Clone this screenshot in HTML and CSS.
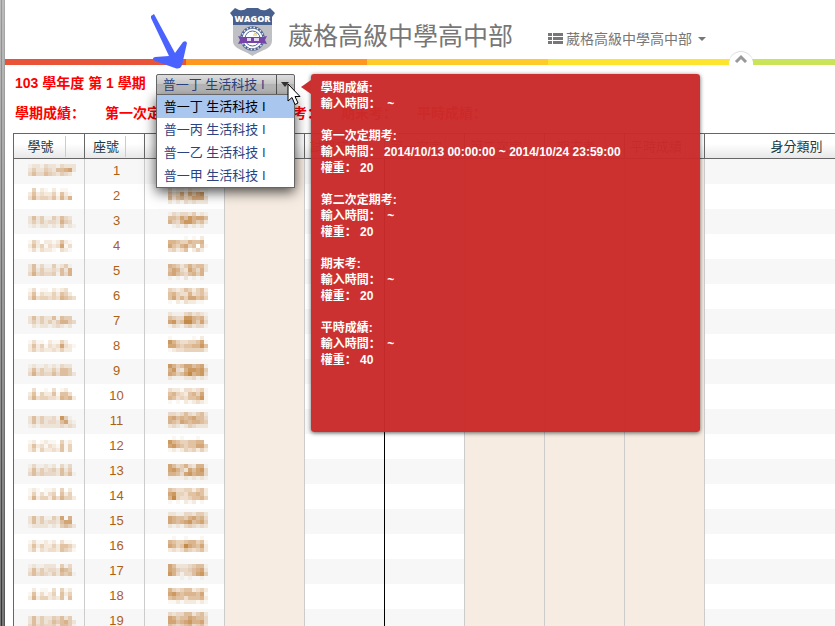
FILE: index.html
```html
<!DOCTYPE html>
<html lang="zh-Hant">
<head>
  <meta charset="UTF-8" />
  <meta name="viewport" content="width=device-width, initial-scale=1.0"/>
  <title>葳格高級中學高中部</title>
  <link rel="stylesheet" href="styles.css">
</head>
<body>
  <div class="edge"></div>
  <div class="page">
    <header class="header">
      <svg class="logo" width="46" height="48" viewBox="0 0 46 48">
        <path d="M3 16H42V33C42 41 31 42 22.500 48C14 42 3 41 3 33Z" fill="#bfc0c3"/>
        <path d="M0 5L5 0L9 2Q14 3 17 0H28Q31 3 36 2L40 0L45 5L42 9V17H3V9Z" fill="#47608f"/>
        <circle cx="22.500" cy="30.500" r="11" fill="#fff" stroke="#4f6594" stroke-width="2.500"/>
        <circle cx="22.500" cy="30.500" r="11" fill="none" stroke="#dfe4ee" stroke-width="1.500" stroke-dasharray="1.500 2"/>
        <circle cx="22.500" cy="30.500" r="7.500" fill="#fff" stroke="#4f6594"/>
        <path d="M24 25l3 1M23 27h4" stroke="#e5c55a"/>
        <path d="M8 28L13 29H32L37 28L35 32L37 36L31 35H14L8 36L10 32Z" fill="#7546a8"/>
        <path d="M17 30h4v3h-4zM24 30h5v3h-5z" fill="#e3d5ef"/>
        <text x="22.500" y="14" class="logo-text">WAGOR</text>
      </svg>
      <h1 class="school">葳格高級中學高中部</h1>
      <a class="school-menu" href="#">
        <svg width="15" height="12" viewBox="0 0 15 12" fill="#777">
          <path d="M0 0h4v3H0zM5 0h10v3H5zM0 4h4v3H0zM5 4h10v3H5zM0 8h4v3H0zM5 8h10v3H5z"/>
        </svg>
        <span>葳格高級中學高中部</span>
        <span class="caret"></span>
      </a>
    </header>

    <div class="rainbow">
      <span class="red"></span>
      <span class="orange"></span>
      <span class="amber"></span>
      <span class="yellow"></span>
      <span class="green"></span>
      <button class="collapse" type="button" aria-label="收合">
        <svg width="14" height="9" viewBox="0 0 14 9"><path d="M2 8L7 3L12 8" fill="none" stroke="#999" stroke-width="3"/></svg>
      </button>
    </div>

    <main class="content">
      <div class="term">
        <label for="course">103 學年度 第 1 學期</label>
        <div class="picker">
          <select id="course" class="course">
            <option>普一丁 生活科技 I</option>
            <option>普一丙 生活科技 I</option>
            <option>普一乙 生活科技 I</option>
            <option>普一甲 生活科技 I</option>
          </select>
          <span class="picker-arrow"></span>
          <ul class="course-list">
            <li class="active">普一丁 生活科技 I</li>
            <li>普一丙 生活科技 I</li>
            <li>普一乙 生活科技 I</li>
            <li>普一甲 生活科技 I</li>
          </ul>
          <div class="tip" lang="zh-Hans">
            <p>學期成績:<br>輸入時間： &nbsp;~</p>
            <p>第一次定期考:<br>輸入時間： 2014/10/13 00:00:00 ~ 2014/10/24 23:59:00<br>權重： 20</p>
            <p>第二次定期考:<br>輸入時間： &nbsp;~<br>權重： 20</p>
            <p>期末考:<br>輸入時間： &nbsp;~<br>權重： 20</p>
            <p>平時成績:<br>輸入時間： &nbsp;~<br>權重： 40</p>
          </div>
          <svg class="cursor" width="14" height="23" viewBox="0 0 14 23">
            <path d="M1 1V18L5 14.500L8 21.500L11 20L8 13.500H13Z" fill="#fff" stroke="#000"/>
          </svg>
        </div>
      </div>

      <div class="scores" lang="zh-Hans">
        <span>學期成績：</span>
        <span>第一次定期考：</span>
        <span>第二次定期考：</span>
        <span>期末考：</span>
        <span>平時成績：</span>
      </div>

      <table class="grid">
        <colgroup>
          <col class="col-id"><col class="col-seat"><col class="col-score"><col class="col-score"><col class="col-score">
          <col class="col-score"><col class="col-score"><col class="col-score"><col class="col-score"><col>
        </colgroup>
        <thead>
          <tr>
            <th><div>學號</div></th>
            <th><div>座號</div></th>
            <th><div>姓名</div></th>
            <th><div>學期成績</div></th>
            <th><div>試算成績</div></th>
            <th><div>第一次定</div></th>
            <th><div>第二次定</div></th>
            <th><div>期末考</div></th>
            <th><div>平時成績</div></th>
            <th><div>身分類別</div></th>
          </tr>
        </thead>
        <tbody id="rows"></tbody>
      </table>
    </main>
  </div>

  <svg class="pointer" width="40" height="60" viewBox="0 0 40 60">
    <path d="M1 3L4 1L25 40L33 29Q36 27 37 30L32 52Q30 57 25 55L5 48Q1 45 5 44L19 43L1 5Z" fill="#4a63ff"/>
  </svg>

  <script>
    // masked student number and name, one digit per block (0 = clear, 9 = darkest)
    const ids = [
      '122132213222 242243255672 353354324320', '040210201100 252322415210 363443526360', '252411425320 242423326430 121221214121',
      '142022125210 252413237130 131322103210', '251311412410 252422325260 363433415360', '130110212300 251322425420 363443436543',
      '252422515440 242424246643 021221232120', '131102114200 252413237321 242322324220', '121121213220 252422425540 363433535542',
      '030010301200 251422515530 363443326562', '252422318410 252423325721 121222223232', '120121104120 252313215140 241422325140',
      '131121203130 252423425240 353433325351', '121011204020 141313405240 262442536442', '252411427060 252423325770 122221214542',
      '131121203110 252422425542 241323325431', '121122204130 252423326540 353432425451', '020110304120 151312405240 262442325150',
      '252422435240 252423545642 353433425541'
    ];
    const names = [
      '2232223221 6345364551 5463556471 2112223232', '3122132211 5347375781 6356457773 2121323222', '1323324121 5547586775 6436886452 0121312120',
      '0000101020 6654465560 7546745051 3423502420', '6542464552 5763275362 6754356460 1010201010', '4323542452 5643363453 5746477564 1021322110',
      '2111342321 5433886562 7845996473 1321342331', '1000001020 8643344571 7754556685 1233444442', '8645775671 6832688784 7645796783 2111223121',
      '3221332341 5643256471 6534355681 1010212321', '3323532452 6756567553 6547656654 2321243222', '0101000100 8654455660 7865455774 1212434242',
      '7534632661 7864275783 6653786773 1111212121', '5433442452 7844355652 6943345564 1010212010', '2211332442 7655467563 7656785674 2121343232',
      '0100100010 6544566451 7645976572 2323543452', '7522234551 7643345672 8631335784 0001010010', '6434552342 7865666571 5655355562 1121222121',
      '3233552452 7645576553 7756786673 5434563452'
    ];

    function mosaic(data, top) {
      let rects = '';
      data.split(' ').forEach((line, y) => {
        for (let x = 0; x < line.length; x++) {
          const alpha = Math.pow(line[x] / 9, 1.15).toFixed(2);
          rects += `<rect x="${x * 4}" y="${top + y * 4}" width="4" height="4" fill-opacity="${alpha}"/>`;
        }
      });
      return `<svg class="mosaic" width="${data.indexOf(' ') * 4}" height="23">${rects}</svg>`;
    }

    const idTop = [5, 4, 7, 6];
    const nameTop = [5, 4, 3, 2];
    let html = '';
    for (let i = 0; i < ids.length; i++) {
      html += `<tr><td>${mosaic(ids[i], idTop[i % 4])}</td><td class="seat">${i + 1}</td><td>${mosaic(names[i], nameTop[i % 4])}</td>`
        + '<td class="locked"></td><td class="total"></td><td></td><td class="locked"></td><td class="locked"></td><td class="locked"></td><td></td></tr>';
    }
    document.getElementById('rows').innerHTML = html;
  </script>
</body>
</html>
```
FILE: styles.css
```css
body {
  margin: 0;
  display: flex;
  height: 100vh;
  overflow: hidden;
  background: #fff;
  font-family: "Liberation Sans", "Noto Sans CJK TC", sans-serif;
  font-size: 13px;
}

.edge {
  flex: none;
  width: 5px;
  background:
    linear-gradient(to bottom, rgba(255,255,255,0.5), rgba(255,255,255,0.3) 40%, transparent),
    linear-gradient(to right, #777 0, #777 1px, #333 1px, #333 2px, #777 2px, #777 4px, #555 4px);
}

.page {
  flex: 1;
  min-width: 0;
  overflow: hidden;
}

.header {
  display: flex;
  align-items: flex-end;
  padding: 8px 0 3px 225px;
  color: #777;
}

.logo {
  flex: none;
}

.logo-text {
  fill: #fff;
  font-family: "Open Sans", "Liberation Sans", sans-serif;
  font-size: 9px;
  font-weight: 800;
  text-anchor: middle;
}

.school {
  margin: 0 35px 4px 12px;
  font-size: 25px;
  line-height: 32px;
  font-weight: normal;
  white-space: nowrap;
}

.school-menu {
  display: flex;
  align-items: center;
  gap: 3px;
  margin-bottom: 7px;
  color: #777;
  font-size: 14px;
  line-height: 20px;
  text-decoration: none;
  white-space: nowrap;
}

.caret {
  margin-left: 3px;
  border: 4px solid transparent;
  border-top-color: #777;
  border-bottom: 0;
}

.rainbow {
  position: relative;
  display: flex;
  height: 6px;
}

.rainbow span {
  width: 181px;
}

.rainbow .red { background: #e95438; }
.rainbow .orange { background: #ff971e; }
.rainbow .amber { background: #ffcb28; }
.rainbow .yellow { background: #fde52f; }
.rainbow .green { flex: 1; background: #cae45a; }

.collapse {
  position: absolute;
  right: 82px;
  bottom: 0;
  width: 24px;
  height: 13px;
  padding: 0;
  border: 0;
  border-radius: 12px 12px 0 0;
  background: #fff;
  box-shadow: 0 -1px 1px #ddd;
  line-height: 9px;
}

.content {
  padding: 9px 0 0 8px;
}

.term {
  display: flex;
  align-items: center;
  gap: 10px;
  padding-left: 2px;
  color: #f00;
  font-size: 14px;
  font-weight: bold;
  line-height: 18px;
}

.term label {
  padding-bottom: 2px;
}

.picker {
  position: relative;
  z-index: 2;
  width: 139px;
  height: 20px;
  font-size: 13px;
  font-weight: normal;
}

.course {
  display: block;
  appearance: none;
  box-sizing: border-box;
  width: 100%;
  height: 21px;
  padding: 0 0 0 6px;
  border: 1px solid #666;
  border-radius: 2px 2px 0 0;
  background: linear-gradient(to bottom, #ddd, #c8c8c8 45%, #b4b4b4 50%, #c4c4c4);
  color: #2b4283;
  font: inherit;
  line-height: 20px;
}

.picker-arrow {
  position: absolute;
  top: 1px;
  right: 0;
  width: 18px;
  height: 19px;
  border-left: 1px solid #555;
}

.picker-arrow::after {
  content: "";
  position: absolute;
  top: 7px;
  left: 4px;
  border: 4px solid transparent;
  border-top: 5px solid #333;
  border-bottom: 0;
}

.course-list {
  position: absolute;
  top: 20px;
  left: 0;
  right: 0;
  margin: 0;
  padding: 0;
  border: 1px solid #666;
  background: #fff;
  box-shadow: 0 4px 12px rgba(0,0,0,0.7);
  color: #2b4283;
  list-style: none;
}

.course-list li {
  padding-left: 7px;
  line-height: 23px;
}

.course-list .active {
  background: #a9c6ef;
  color: #000;
}

.tip {
  position: absolute;
  top: 0;
  left: 155px;
  box-sizing: border-box;
  width: 389px;
  min-height: 358px;
  padding: 6px 10px;
  border-radius: 3px;
  background: rgba(202,42,42,0.97);
  box-shadow: 0 1px 4px rgba(0,0,0,0.6);
  color: #fff;
  font-family: "Liberation Sans", "Noto Sans CJK SC", sans-serif;
  font-size: 12px;
  font-weight: bold;
  line-height: 16px;
}

.tip::before {
  content: "";
  position: absolute;
  top: 6px;
  left: -10px;
  border: 7px solid transparent;
  border-right: 10px solid #cb2e2e;
  border-left: 0;
}

.tip p {
  margin: 0 0 16px;
}

.cursor {
  position: absolute;
  top: 9px;
  left: 131px;
}

.scores {
  display: flex;
  gap: 20px;
  padding: 9px 0 10px 2px;
  color: #f00;
  font-family: "Liberation Sans", "Noto Sans CJK SC", sans-serif;
  font-size: 14px;
  font-weight: bold;
  line-height: 20px;
  white-space: nowrap;
}

.grid {
  width: 100%;
  min-width: 893px;
  table-layout: fixed;
  border-collapse: separate;
  border-spacing: 0;
  border-left: 1px solid #666;
}

.col-id { width: 71px; }
.col-seat { width: 60px; }
.col-score { width: 80px; }

.grid th {
  padding: 2px 18px 1px 2px;
  border: 1px solid #666;
  border-left: 0;
  background: linear-gradient(to bottom, #fff, #fff 40%, #e8e8e8);
  color: #173a45;
  font-weight: normal;
  line-height: 21px;
  white-space: nowrap;
}

.grid th div {
  display: flex;
  justify-content: center;
  border-right: 1px solid #ccc;
}

.grid td {
  height: 23px;
  padding: 0 0 2px;
  border-right: 1px solid #ccc;
  line-height: 23px;
  text-align: center;
}

.grid tbody tr:nth-child(odd) {
  background: #f7f7f7;
}

.grid .seat {
  padding-left: 4px;
  color: #ad6014;
}

.grid .locked {
  background: #f7ece2;
}

.grid .total {
  border-right-color: #000;
}

.mosaic {
  display: block;
  margin: 0 auto;
  padding-left: 6px;
  fill: #c48a4a;
}

.pointer {
  position: absolute;
  top: 13px;
  left: 150px;
  z-index: 3;
}
```
